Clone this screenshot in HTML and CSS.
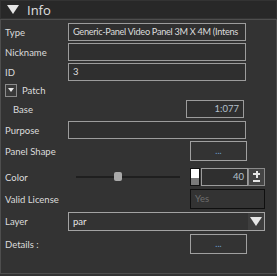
FILE: index.html
```html
<!DOCTYPE html>
<html lang="en">
<head>
  <meta charset="UTF-8">
  <title>Info</title>
  <link rel="stylesheet" href="styles.css">
</head>
<body>
  <div class="panel">
    <div class="panel-header">
      <span class="caret-big"></span>
      <span class="panel-title">Info</span>
    </div>

    <div class="panel-body">
      <div class="row r-type">
        <label class="lbl">Type</label>
        <div class="field wide tight">Generic-Panel Video Panel 3M X 4M (Intens</div>
      </div>
      <div class="row r-text">
        <label class="lbl">Nickname</label>
        <div class="field wide"></div>
      </div>
      <div class="row r-text">
        <label class="lbl">ID</label>
        <div class="field wide">3</div>
      </div>

      <div class="row r-patch">
        <span class="toggle"><span class="caret-small"></span></span>
        <span class="lbl-patch">Patch</span>
      </div>
      <div class="row r-base">
        <label class="lbl sub">Base</label>
        <div class="field num base">1:077</div>
      </div>

      <div class="row r-purpose">
        <label class="lbl">Purpose</label>
        <div class="field wide"></div>
      </div>
      <div class="row r-shape">
        <label class="lbl">Panel Shape</label>
        <button class="dots">...</button>
      </div>

      <div class="row r-color">
        <label class="lbl">Color</label>
        <div class="slider"><span class="thumb"></span></div>
        <span class="swatch"></span>
        <div class="field num level">40</div>
        <span class="stepper">
          <span class="plus"></span>
          <span class="minus"></span>
        </span>
      </div>

      <div class="row r-license">
        <label class="lbl">Valid License</label>
        <div class="readonly">Yes</div>
      </div>

      <div class="row r-layer">
        <label class="lbl">Layer</label>
        <div class="select">
          <span class="select-val">par</span>
          <span class="select-btn"><span class="caret-big"></span></span>
        </div>
      </div>

      <div class="row r-details">
        <label class="lbl">Details :</label>
        <button class="dots">...</button>
      </div>
    </div>
  </div>
</body>
</html>
```

FILE: styles.css
```css
body {
  margin: 0;
  background: #333333;
  font-family: Lato, "Liberation Sans", sans-serif;
  font-size: 9.5px;
  color: #dcdcdc;
}
.panel {
  width: 277px;
  height: 276px;
  background: #333333;
  padding-top: 1px;
  box-sizing: border-box;
}
.panel-header {
  height: 17px;
  margin: 0 1px 1px 1px;
  background: #282828;
  display: flex;
  align-items: center;
  padding-left: 6px;
}
.caret-big {
  width: 0;
  height: 0;
  border-left: 6px solid transparent;
  border-right: 6px solid transparent;
  border-top: 9px solid #e6e6e6;
}
.panel-title {
  margin-left: 8px;
  font-size: 13px;
  color: #e0e0e0;
  font-family: "Open Sans", sans-serif;
}
.panel-body {
  height: 255px;
  border: 1px solid #4e4e4e;
  box-sizing: border-box;
  padding: 3px 4px 0 4px;
}
.row {
  display: flex;
  align-items: center;
}
.lbl {
  width: 63px;
  flex-shrink: 0;
  white-space: nowrap;
}
.lbl.sub {
  padding-left: 8px;
  box-sizing: border-box;
}
.field {
  height: 18px;
  box-sizing: border-box;
  border: 1px solid #9c9c9c;
  background: #2f2f2f;
  padding: 0 4px;
  line-height: 16px;
  white-space: nowrap;
  overflow: hidden;
}
.field.wide {
  width: 178px;
}
.field.tight {
  font-size: 9.2px;
  letter-spacing: -0.3px;
  padding-right: 1px;
}
.field.num {
  text-align: right;
  color: #b4c0cc;
}
.r-type { height: 18px; }
.r-text { height: 18px; margin-top: 2px; }
.r-patch { height: 14px; margin-top: 2px; }
.r-base { height: 18px; margin-top: 3px; }
.field.base {
  width: 58px;
  margin-left: 118px;
}
.r-purpose { height: 18px; margin-top: 3px; }
.r-shape { height: 20px; margin-top: 2px; }
.toggle {
  width: 12px;
  height: 13px;
  box-sizing: border-box;
  border: 1px solid #8c8c8c;
  background: #3a3a3a;
  display: flex;
  align-items: center;
  justify-content: center;
}
.caret-small {
  width: 0;
  height: 0;
  border-left: 3px solid transparent;
  border-right: 3px solid transparent;
  border-top: 4px solid #e8e8e8;
}
.lbl-patch {
  margin-left: 5px;
}
.dots {
  width: 57px;
  height: 20px;
  margin-left: 122px;
  border: 1px solid #a0a0a0;
  background: #333333;
  color: #6a9ccc;
  font-family: Lato, sans-serif;
  font-size: 9px;
  padding: 0;
  line-height: 16px;
}
.r-color { height: 18px; margin-top: 7px; }
.slider {
  width: 104px;
  height: 2px;
  margin-left: 8px;
  background: #1f1f1f;
  position: relative;
}
.thumb {
  position: absolute;
  left: 38px;
  top: -4px;
  width: 8px;
  height: 9px;
  border-radius: 2px;
  background: #a9a9a9;
}
.swatch {
  width: 10px;
  height: 18px;
  box-sizing: border-box;
  margin-left: 10px;
  border: 1px solid #111;
  background: linear-gradient(#ffffff 0 55%, #7a7a7a 55% 100%);
}
.field.level {
  width: 47px;
  margin-left: 1px;
  padding-right: 3px;
}
.stepper {
  width: 17px;
  height: 18px;
  box-sizing: border-box;
  border: 1px solid #8a8a8a;
  background: #444444;
  position: relative;
}
.plus::before, .plus::after, .minus::before {
  content: "";
  position: absolute;
  background: #e6e6e6;
}
.plus::before { left: 4px; top: 4px; width: 7px; height: 2px; }
.plus::after { left: 6.5px; top: 1.5px; width: 2px; height: 7px; }
.minus::before { left: 4px; top: 11px; width: 7px; height: 2px; }
.r-license { height: 20px; margin-top: 3px; }
.readonly {
  width: 75px;
  height: 20px;
  margin-left: 122px;
  box-sizing: border-box;
  border: 1px solid #0f0f0f;
  padding-left: 4px;
  line-height: 18px;
  color: #6e6e6e;
}
.r-layer { height: 19px; margin-top: 3px; }
.select {
  width: 197px;
  height: 19px;
  box-sizing: border-box;
  border: 1px solid #a3a3a3;
  display: flex;
  align-items: center;
}
.select-val {
  flex: 1;
  padding-left: 4px;
  color: #e6e6e6;
}
.select-btn {
  width: 16px;
  height: 17px;
  background: #3e3e3e;
  display: flex;
  align-items: center;
  justify-content: center;
}
.r-details { height: 20px; margin-top: 3px; }
```
